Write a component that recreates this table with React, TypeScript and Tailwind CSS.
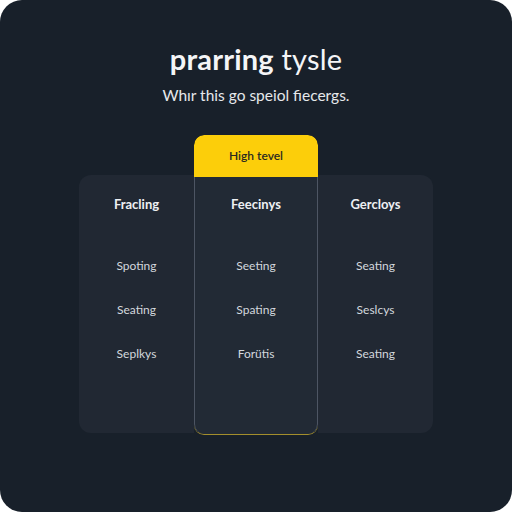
import React from "react";

const cols = [
  { head: "Fracling", rows: ["Spoting", "Seating", "Seplkys"] },
  { head: "Feecinys", rows: ["Seeting", "Spating", "Forütis"] },
  { head: "Gercloys", rows: ["Seating", "Seslcys", "Seating"] },
];

function Body({ head, rows }: { head: string; rows: string[] }) {
  return (
    <div className="flex flex-col items-center">
      <div className="h-[60px] flex items-center text-[13px] font-bold text-[#eef0f3]">{head}</div>
      <div className="flex flex-col items-center gap-[25px] mt-[21px] text-[12px] text-[#d3d7dd]">
        {rows.map((r, i) => (
          <div key={i} className="h-[19px] leading-[19px]">{r}</div>
        ))}
      </div>
    </div>
  );
}

export default function App() {
  return (
    <div className="w-[512px] h-[512px] bg-white">
      <div
        className="w-[512px] h-[512px] rounded-[22px] bg-[#18202a] flex flex-col items-center"
        style={{ fontFamily: "Lato, 'Open Sans', sans-serif" }}
      >
        <div className="mt-[41px] text-[29px] leading-[36px] text-[#f4f5f7] tracking-[0.2px]">
          <span className="font-bold">prarring</span> <span className="font-normal">tysle</span>
        </div>
        <div className="mt-[8px] text-[15.5px] leading-[20px] text-[#e6e8eb]">Whır this go speiol fiecergs.</div>
        <div className="mt-[30px] flex items-start">
          <div className="mt-[40px] w-[115px] h-[258px] bg-[#212833] rounded-l-[12px]">
            <Body {...cols[0]} />
          </div>
          <div className="w-[124px] h-[300px] flex flex-col rounded-[10px] overflow-hidden border-b border-[#a38e2c]">
            <div className="h-[42px] bg-[#fcce0a] flex items-center justify-center text-[12px] font-semibold text-[#2a2a20] rounded-t-[10px]">
              High tevel
            </div>
            <div className="flex-1 bg-[#222a35] border-x border-[#4d5563] rounded-b-[10px]">
              <div className="-mt-[2px]">
                <Body {...cols[1]} />
              </div>
            </div>
          </div>
          <div className="mt-[40px] w-[115px] h-[258px] bg-[#212833] rounded-r-[12px]">
            <Body {...cols[2]} />
          </div>
        </div>
      </div>
    </div>
  );
}
